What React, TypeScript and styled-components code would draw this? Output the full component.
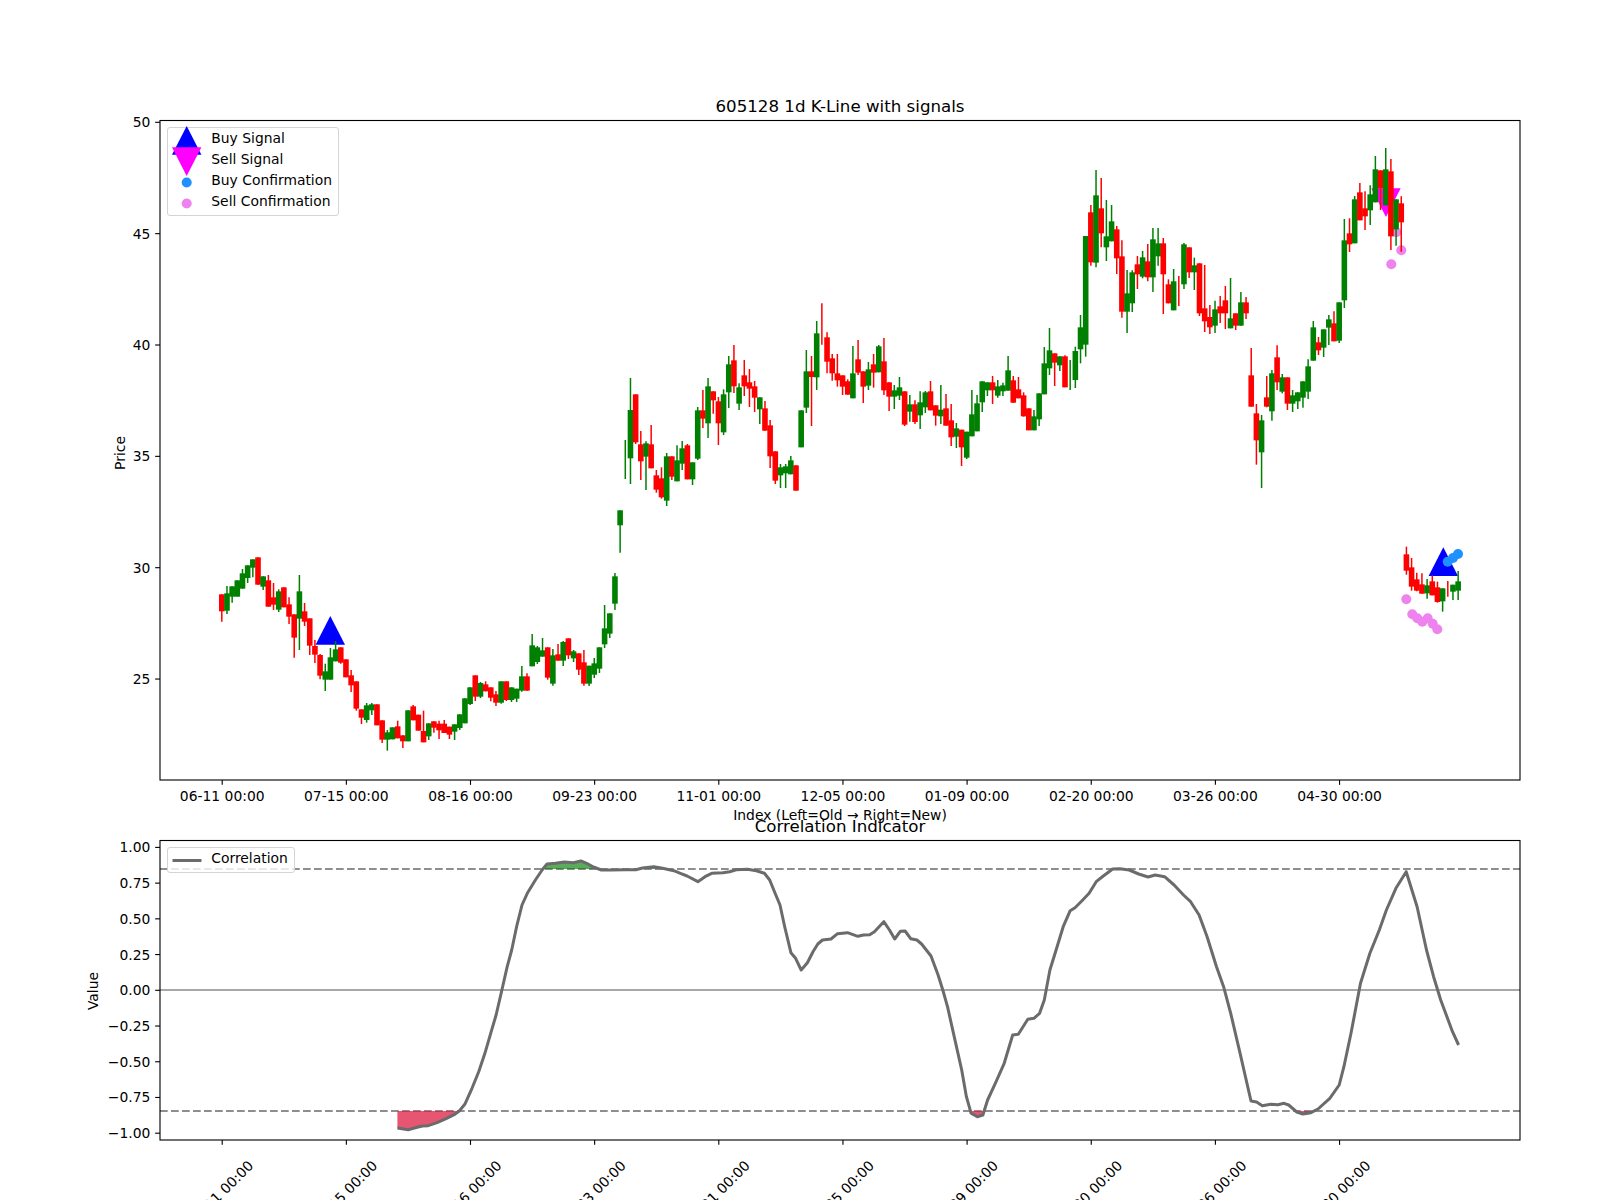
import React from "react";
import styled, { createGlobalStyle } from "styled-components";

type Bar = [string, number, number, number, number];
type Crop = { base: number; bars: Bar[] };
type Pt = [number, number];

// wick top, body top, body bottom, wick bottom, read off 3x crops (y = base + v / 3)
const crops: Crop[] = [
  {
    base: 500,
    bars: [
      ["r", 283, 283, 334, 365], ["g", 258, 280, 332, 342], ["g", 259, 259, 290, 308], ["g", 241, 241, 290, 290],
      ["g", 207, 220, 266, 266], ["g", 196, 196, 234, 249], ["g", 178, 178, 203, 232], ["r", 172, 172, 254, 254],
      ["g", 229, 229, 260, 270], ["r", 225, 241, 320, 320], ["r", 249, 292, 314, 330], ["g", 268, 274, 329, 336],
      ["r", 262, 262, 322, 322], ["r", 292, 313, 350, 372], ["r", 343, 343, 413, 473], ["g", 225, 274, 356, 450],
      ["r", 309, 334, 365, 378], ["r", 355, 355, 437, 465], ["r", 420, 438, 464, 489], ["r", 462, 465, 527, 538],
      ["g", 491, 514, 539, 573], ["g", 444, 472, 539, 539], ["g", 423, 448, 484, 484], ["r", 442, 442, 488, 491],
      ["r", 478, 478, 532, 532], ["r", 510, 526, 556, 576], ["r", 544, 544, 626, 632], ["r", 628, 628, 653, 672],
      ["g", 609, 616, 660, 668], ["g", 609, 613, 631, 645], ["r", 613, 613, 676, 676], ["r", 661, 661, 719, 729],
      ["g", 690, 697, 719, 752], ["g", 682, 682, 718, 718], ["r", 662, 679, 715, 715], ["r", 706, 706, 724, 744],
      ["g", 631, 631, 724, 724], ["r", 615, 619, 661, 661], ["r", 644, 644, 692, 692],
    ],
  },
  {
    base: 500,
    bars: [
      ["r", 632, 693, 727, 727], ["g", 670, 670, 709, 720], ["r", 664, 664, 683, 698], ["r", 662, 671, 691, 717],
      ["r", 660, 671, 699, 699], ["r", 680, 680, 704, 717], ["g", 673, 673, 695, 720], ["g", 643, 643, 684, 690],
      ["g", 595, 595, 670, 670], ["g", 562, 562, 612, 615], ["r", 526, 526, 590, 603], ["g", 546, 549, 590, 594],
      ["r", 544, 553, 574, 574], ["r", 562, 562, 593, 604], ["r", 573, 583, 608, 618], ["g", 544, 544, 608, 611],
      ["r", 544, 544, 600, 603], ["g", 562, 562, 600, 606], ["g", 566, 566, 596, 606], ["g", 498, 529, 572, 575],
      ["r", 520, 529, 572, 572], ["g", 402, 436, 499, 499], ["g", 438, 442, 486, 492], ["g", 414, 451, 470, 470],
      ["r", 442, 442, 533, 539], ["g", 447, 466, 551, 557], ["r", 432, 463, 482, 482], ["g", 423, 426, 482, 498],
      ["r", 415, 415, 466, 477], ["g", 450, 454, 475, 486], ["r", 460, 460, 509, 525], ["r", 450, 487, 551, 557],
      ["g", 497, 497, 551, 558], ["g", 474, 490, 524, 534], ["g", 442, 442, 506, 519], ["g", 315, 385, 433, 444],
      ["g", 340, 340, 401, 414], ["g", 219, 229, 311, 330], ["g", 31, 31, 76, 158],
    ],
  },
  {
    base: 340,
    bars: [
      ["g", 300, 0, 0, 417], ["g", 114, 210, 355, 432], ["r", 163, 163, 307, 312], ["r", 273, 313, 364, 420],
      ["g", 304, 310, 350, 450], ["r", 255, 313, 385, 385], ["r", 390, 406, 449, 458], ["r", 382, 415, 472, 476],
      ["g", 339, 349, 482, 498], ["r", 349, 349, 410, 420], ["g", 316, 361, 424, 424], ["g", 303, 325, 371, 390],
      ["r", 312, 316, 418, 418], ["g", 367, 367, 418, 435], ["g", 201, 211, 356, 360], ["r", 150, 211, 236, 264],
      ["g", 114, 139, 250, 294], ["r", 154, 154, 181, 221], ["r", 171, 184, 250, 315], ["g", 148, 163, 277, 285],
      ["g", 48, 73, 157, 204], ["r", 15, 61, 139, 159], ["g", 130, 142, 191, 210], ["r", 60, 106, 139, 168],
      ["r", 87, 127, 146, 201], ["r", 123, 139, 173, 216], ["g", 172, 172, 208, 252], ["r", 183, 205, 272, 272],
      ["r", 240, 256, 349, 384], ["r", 334, 334, 422, 432], ["g", 372, 382, 406, 444], ["g", 372, 379, 400, 444],
      ["g", 348, 361, 403, 403], ["r", 376, 376, 452, 452], ["g", 211, 211, 322, 322], ["g", 30, 94, 203, 219],
      ["r", 48, 94, 111, 258], ["g", -57, -20, 112, 150], ["r", -110, 0, 0, 14], ["r", -23, -8, 65, 100],
    ],
  },
  {
    base: 280,
    bars: [
      ["r", 222, 235, 280, 302], ["r", 222, 280, 301, 320], ["r", 286, 286, 320, 345], ["r", 298, 304, 344, 344],
      ["g", 198, 280, 355, 355], ["r", 180, 238, 278, 285], ["r", 274, 274, 320, 369], ["g", 246, 268, 317, 330],
      ["r", 222, 253, 278, 323], ["g", 195, 199, 277, 277], ["r", 174, 244, 331, 345], ["r", 307, 307, 350, 393],
      ["g", 315, 331, 350, 387], ["g", 291, 322, 347, 360], ["r", 334, 334, 434, 438], ["g", 345, 373, 395, 425],
      ["r", 361, 373, 426, 432], ["g", 334, 367, 406, 447], ["g", 333, 337, 382, 399], ["r", 303, 334, 391, 391],
      ["r", 376, 376, 407, 437], ["g", 315, 389, 409, 432], ["r", 342, 385, 437, 437], ["r", 372, 421, 472, 498],
      ["g", 429, 445, 470, 504], ["r", 449, 449, 502, 558], ["g", 455, 455, 533, 537], ["g", 330, 403, 469, 469],
      ["g", 345, 370, 454, 454], ["g", 304, 304, 367, 396], ["g", 307, 307, 331, 348], ["r", 288, 307, 331, 372],
      ["g", 300, 319, 347, 353], ["g", 308, 316, 334, 348], ["g", 228, 271, 332, 332], ["r", 288, 301, 368, 369],
      ["r", 291, 328, 355, 355], ["r", 337, 346, 409, 410], ["r", 385, 385, 451, 451], ["g", 390, 409, 451, 451],
      ["g", 340, 340, 418, 438], ["g", 201, 250, 343, 343], ["g", 144, 211, 265, 285], ["r", 220, 220, 248, 318],
      ["g", 229, 229, 256, 273], ["r", 226, 229, 322, 322],
    ],
  },
  {
    base: 150,
    bars: [
      ["g", 630, 0, 0, 720], ["g", 590, 603, 690, 714], ["g", 495, 532, 598, 640], ["g", 258, 258, 584, 620],
      ["r", 165, 187, 337, 347], ["g", 60, 136, 338, 352], ["r", 84, 175, 250, 292], ["g", 150, 259, 292, 333],
      ["g", 165, 214, 274, 274], ["r", 228, 238, 325, 372], ["r", 271, 319, 485, 503], ["g", 360, 430, 485, 549],
      ["g", 361, 367, 460, 486], ["r", 318, 343, 373, 417], ["g", 303, 322, 380, 385], ["r", 282, 334, 382, 394],
      ["g", 234, 268, 382, 426], ["g", 234, 280, 319, 347], ["r", 264, 280, 373, 492], ["r", 388, 403, 460, 460],
      ["g", 357, 394, 481, 481], ["r", 378, 0, 0, 468], ["g", 279, 283, 403, 417], ["r", 292, 292, 367, 384],
      ["g", 323, 346, 367, 420], ["r", 340, 340, 490, 498], ["r", 345, 475, 514, 546], ["r", 465, 501, 532, 552],
      ["g", 452, 478, 527, 549], ["r", 438, 469, 490, 519], ["r", 408, 451, 490, 537], ["g", 384, 505, 535, 535],
      ["r", 490, 490, 527, 540], ["g", 426, 457, 527, 527], ["r", 441, 457, 490, 507],
    ],
  },
  {
    base: 150,
    bars: [
      ["r", 594, 676, 770, 770], ["r", 762, 790, 871, 944], ["g", 795, 811, 907, 1014], ["r", 678, 742, 770, 772],
      ["g", 660, 670, 784, 812], ["r", 586, 622, 697, 720], ["g", 672, 682, 725, 730], ["r", 682, 682, 761, 780],
      ["g", 720, 736, 761, 786], ["g", 727, 727, 754, 777], ["g", 694, 694, 743, 773], ["g", 628, 649, 725, 747],
      ["g", 513, 532, 632, 632], ["r", 561, 577, 601, 615], ["g", 538, 538, 593, 621], ["g", 495, 508, 533, 585],
      ["r", 484, 520, 574, 574], ["g", 457, 457, 572, 579], ["g", 207, 271, 451, 474], ["r", 205, 250, 283, 306],
      ["g", 138, 148, 280, 280], ["r", 99, 127, 211, 211], ["r", 124, 175, 199, 240], ["g", 106, 133, 181, 225],
      ["g", 18, 58, 157, 157], ["r", 61, 61, 115, 180], ["g", -6, 58, 166, 166], ["r", 27, 64, 259, 300],
      ["g", 148, 148, 238, 287], ["r", 139, 160, 217, 305],
    ],
  },
  {
    base: 530,
    bars: [
      ["r", 50, 73, 122, 134], ["r", 84, 112, 170, 182], ["r", 128, 148, 182, 184], ["r", 130, 163, 191, 191],
      ["g", 147, 166, 190, 206], ["r", 136, 154, 196, 196], ["r", 155, 172, 216, 218], ["g", 175, 175, 214, 245],
      ["r", 153, 0, 0, 200], ["g", 164, 164, 185, 210], ["g", 123, 154, 182, 210],
    ],
  },
];

const candles = crops.flatMap(({ base, bars }) =>
  bars.map(([c, wt, bt, bb, wb]) => ({
    color: c === "r" ? "#ff0000" : "#008000",
    wickTop: base + wt / 3,
    bodyTop: base + bt / 3,
    bodyBottom: base + bb / 3,
    wickBottom: base + wb / 3,
  })),
);

const barX = (i: number) => 221.8 + 5.173 * i;

const dates = ["06-11", "07-15", "08-16", "09-23", "11-01", "12-05", "01-09", "02-20", "03-26", "04-30"];
const dateTicks = dates.map((d, k) => ({ label: `${d} 00:00`, x: 222.2 + 124.15 * k }));

const priceTicks = [25, 30, 35, 40, 45, 50].map((p) => ({
  label: String(p),
  y: 122.3 + (50 - p) * 22.27,
}));

const corrTicks = [1, 0.75, 0.5, 0.25, 0, -0.25, -0.5, -0.75, -1].map((v) => ({
  label: v.toFixed(2).replace("-", "\u2212"),
  y: 990.3 - v * 142.9,
}));

const buySignals: Pt[] = [[330.3, 644.7], [1443.3, 576]];
const sellSignals: Pt[] = [[1386, 188.3]];
const buyDots: Pt[] = [[1447.7, 561.7], [1453, 558], [1458, 554]];
const sellDots: Pt[] = [
  [1396.3, 232.3], [1401.3, 250.3], [1391.3, 264.3], [1406.3, 599.3], [1412.3, 614.3],
  [1417.3, 618.3], [1422.3, 621.7], [1427.7, 618.3], [1432.7, 623.7], [1437.3, 629.3],
];

// correlation line, read off the two wide crops
const corrLeft: Pt[] = [
  [711, 1074], [735, 1079], [755, 1072], [767, 1068], [780, 1067], [800, 1058], [820, 1046], [838, 1034],
  [850, 1022], [862, 1003], [878, 955], [893, 905], [907, 850], [920, 790], [932, 735], [945, 660],
  [957, 590], [967, 540], [978, 470], [990, 405], [1002, 370], [1020, 330], [1035, 300], [1046, 282],
  [1065, 280], [1085, 276], [1105, 278], [1122, 273], [1135, 280], [1150, 291], [1168, 300], [1190, 300],
  [1220, 299], [1245, 299], [1260, 294], [1285, 290], [1305, 295], [1330, 302], [1345, 310], [1360, 318],
  [1384, 335], [1400, 320], [1415, 310], [1440, 308], [1455, 305], [1470, 299], [1495, 298], [1515, 302],
  [1533, 310], [1545, 330], [1557, 370],
];
const corrRight: Pt[] = [
  [0, 405], [10, 470], [23, 548], [33, 565], [45, 600], [58, 578], [70, 545], [80, 522], [90, 510],
  [108, 507], [122, 491], [143, 488], [165, 499], [177, 495], [190, 494], [200, 485], [220, 455],
  [232, 480], [243, 507], [255, 484], [265, 483], [277, 506], [290, 510], [300, 522], [320, 558],
  [335, 615], [345, 660], [355, 710], [370, 805], [385, 900], [395, 980], [405, 1030], [418, 1040],
  [430, 1035], [440, 990], [458, 935], [475, 880], [493, 795], [505, 793], [525, 748], [538, 745],
  [550, 730], [560, 690], [572, 600], [585, 540], [600, 470], [615, 422], [625, 413], [640, 392],
  [655, 370], [670, 335], [685, 318], [705, 297], [720, 296], [740, 300], [760, 312], [780, 321],
  [795, 315], [815, 320], [835, 345], [855, 375], [870, 395], [888, 435], [905, 500], [925, 590],
  [940, 650], [955, 730], [975, 850], [998, 993], [1010, 996], [1022, 1007], [1040, 1003], [1055, 1004],
  [1068, 1000], [1078, 1005], [1095, 1026], [1108, 1032], [1125, 1028], [1140, 1017], [1165, 985],
  [1185, 945], [1195, 890], [1210, 790], [1230, 640], [1250, 550], [1270, 480], [1285, 420], [1305, 355],
  [1327, 305], [1350, 410], [1370, 540], [1385, 620], [1400, 690], [1425, 785], [1438, 825],
];
const corrLine: Pt[] = [
  ...corrLeft.map(([x, y]): Pt => [80 + x / 2.24, 770 + y / 3]),
  ...corrRight.map(([x, y]): Pt => [780 + x / 2.119, 770 + y / 3]),
];

const UPPER_Y = 869;
const LOWER_Y = 1111;

// parts of the line beyond a threshold, closed along the threshold
const beyondRegions = (pts: Pt[], level: number, above: boolean) => {
  const past = (y: number) => (above ? y < level : y > level);
  const out: Pt[][] = [];
  let cur: Pt[] = [];
  pts.forEach(([x, y], i) => {
    const prev = pts[i - 1];
    const cross = (): Pt => {
      const t = (level - prev[1]) / (y - prev[1]);
      return [prev[0] + (x - prev[0]) * t, level];
    };
    if (past(y)) {
      if (!cur.length) cur.push(prev ? cross() : [x, level]);
      cur.push([x, y]);
    } else if (cur.length) {
      cur.push(cross());
      out.push(cur);
      cur = [];
    }
  });
  return out;
};

const toPoints = (pts: Pt[]) => pts.map(([x, y]) => `${x.toFixed(1)},${y.toFixed(1)}`).join(" ");
const upTriangle = (x: number, y: number) => `${x - 14.7},${y} ${x + 14.7},${y} ${x},${y - 28.7}`;
const downTriangle = (x: number, y: number) => `${x - 14.7},${y} ${x + 14.7},${y} ${x},${y + 28.7}`;

const GlobalStyle = createGlobalStyle`
  html, body {
    margin: 0;
    padding: 0;
    background: #ffffff;
  }
`;

const Figure = styled.div`
  width: 1600px;
  height: 1200px;
  overflow: hidden;
  display: flex;
  flex-direction: column;
  background: #ffffff;
  color: #000000;
  font-family: "DejaVu Sans", sans-serif;
`;

const Panel = styled.section<{ $height: number }>`
  position: relative;
  flex: none;
  height: ${({ $height }) => $height}px;
`;

const Canvas = styled.svg`
  display: block;
  overflow: visible;
`;

const Frame = styled.rect`
  fill: none;
  stroke: #000000;
  stroke-width: 1.11;
`;

const TickMark = styled.line`
  stroke: #000000;
  stroke-width: 1.11;
`;

const TickLabel = styled.text`
  font-size: 13.89px;
  fill: #000000;
`;

const PlotTitle = styled.text`
  font-size: 16.67px;
  fill: #000000;
  text-anchor: middle;
`;

const Wick = styled.line`
  stroke-width: 1.5;
`;

const DashedLevel = styled.line`
  stroke: #8e8e8e;
  stroke-width: 2.2;
  stroke-dasharray: 7.7 3.3;
`;

const ZeroLine = styled.line`
  stroke: #a8a8a8;
  stroke-width: 2.2;
`;

const CorrPath = styled.polyline`
  fill: none;
  stroke: #6b6b6b;
  stroke-width: 3;
  stroke-linejoin: round;
`;

const Legend = styled.div<{ $top: number; $width: number }>`
  position: absolute;
  left: 167.3px;
  top: ${({ $top }) => $top}px;
  width: ${({ $width }) => $width}px;
  box-sizing: border-box;
  padding: 2px 0 0.4px 4px;
  border: 1.1px solid #d4d4d4;
  border-radius: 3px;
  background: rgba(255, 255, 255, 0.8);
`;

const LegendRow = styled.div`
  display: grid;
  grid-template-columns: 29.4px 1fr;
  column-gap: 9.6px;
  align-items: center;
  height: 21px;
`;

const LegendKey = styled.svg`
  display: block;
  width: 29.4px;
  height: 21px;
  overflow: visible;
`;

const LegendLabel = styled.span`
  font-size: 13.89px;
  line-height: 21px;
  white-space: nowrap;
  position: relative;
  top: -2px;
`;

const legendItems = [
  { label: "Buy Signal", key: <polygon points="0,24.7 29.4,24.7 14.7,-4" fill="#0000ff" /> },
  { label: "Sell Signal", key: <polygon points="0,-3.7 29.4,-3.7 14.7,25" fill="#ff00ff" /> },
  { label: "Buy Confirmation", key: <circle cx="14.7" cy="10.5" r="5" fill="#1e90ff" /> },
  { label: "Sell Confirmation", key: <circle cx="14.7" cy="10.5" r="5" fill="#ee82ee" /> },
];

const XTicks = ({ axisY, rotated }: { axisY: number; rotated?: boolean }) => (
  <>
    {dateTicks.map((t) => (
      <g key={t.label}>
        <TickMark x1={t.x} x2={t.x} y1={axisY} y2={axisY + 4.86} />
        {rotated ? (
          <TickLabel textAnchor="middle" transform={`translate(${t.x - 1.5} 1193) rotate(-45)`} dy="5">
            {t.label}
          </TickLabel>
        ) : (
          <TickLabel x={t.x} y={axisY + 21} textAnchor="middle">
            {t.label}
          </TickLabel>
        )}
      </g>
    ))}
  </>
);

const YTicks = ({ ticks }: { ticks: { label: string; y: number }[] }) => (
  <>
    {ticks.map((t) => (
      <g key={t.label}>
        <TickMark x1={155.14} x2={160} y1={t.y} y2={t.y} />
        <TickLabel x={150.3} y={t.y + 5} textAnchor="end">
          {t.label}
        </TickLabel>
      </g>
    ))}
  </>
);

const PricePanel = () => (
  <Panel $height={820}>
    <Canvas width={1600} height={820} viewBox="0 0 1600 820">
      {buySignals.map(([x, y]) => (
        <polygon key={x} points={upTriangle(x, y)} fill="#0000ff" />
      ))}
      {sellSignals.map(([x, y]) => (
        <polygon key={x} points={downTriangle(x, y)} fill="#ff00ff" />
      ))}
      {buyDots.map(([x, y]) => (
        <circle key={x} cx={x} cy={y} r={5} fill="#1e90ff" />
      ))}
      {sellDots.map(([x, y]) => (
        <circle key={x} cx={x} cy={y} r={5} fill="#ee82ee" />
      ))}
      {candles.map((c, i) => (
        <g key={i}>
          <Wick x1={barX(i)} x2={barX(i)} y1={c.wickTop} y2={c.wickBottom} stroke={c.color} />
          {c.bodyBottom > c.bodyTop && (
            <rect
              x={barX(i) - 2.8}
              y={c.bodyTop}
              width={5.6}
              height={c.bodyBottom - c.bodyTop}
              fill={c.color}
            />
          )}
        </g>
      ))}
      <Frame x={160} y={120.5} width={1360} height={659.5} />
      <YTicks ticks={priceTicks} />
      <XTicks axisY={780} />
      <PlotTitle x={840} y={111.7}>605128 1d K-Line with signals</PlotTitle>
      <TickLabel transform="translate(125 453) rotate(-90)" textAnchor="middle">Price</TickLabel>
      <TickLabel x={840} y={820} textAnchor="middle">Index (Left=Old → Right=New)</TickLabel>
    </Canvas>
    <Legend $top={127.3} $width={171.4}>
      {legendItems.map((item) => (
        <LegendRow key={item.label}>
          <LegendKey viewBox="0 0 29.4 21">{item.key}</LegendKey>
          <LegendLabel>{item.label}</LegendLabel>
        </LegendRow>
      ))}
    </Legend>
  </Panel>
);

const CorrelationPanel = () => (
  <Panel $height={380}>
    <Canvas width={1600} height={380} viewBox="0 820 1600 380">
      <DashedLevel x1={160} x2={1520} y1={UPPER_Y} y2={UPPER_Y} />
      <DashedLevel x1={160} x2={1520} y1={LOWER_Y} y2={LOWER_Y} />
      <ZeroLine x1={160} x2={1520} y1={990} y2={990} />
      {beyondRegions(corrLine, UPPER_Y, true).map((r, i) => (
        <polygon key={i} points={toPoints(r)} fill="#008000" fillOpacity={0.65} />
      ))}
      {beyondRegions(corrLine, LOWER_Y, false).map((r, i) => (
        <polygon key={i} points={toPoints(r)} fill="#dc143c" fillOpacity={0.72} />
      ))}
      <CorrPath points={toPoints(corrLine)} />
      <Frame x={160} y={840.5} width={1360} height={299.5} />
      <YTicks ticks={corrTicks} />
      <XTicks axisY={1140} rotated />
      <PlotTitle x={840} y={831.7}>Correlation Indicator</PlotTitle>
      <TickLabel transform="translate(98 991) rotate(-90)" textAnchor="middle">Value</TickLabel>
    </Canvas>
    <Legend $top={27.3} $width={127.5}>
      <LegendRow>
        <LegendKey viewBox="0 0 29.4 21">
          <line x1="0.5" x2="29.5" y1="10.5" y2="10.5" stroke="#6b6b6b" strokeWidth="3" />
        </LegendKey>
        <LegendLabel>Correlation</LegendLabel>
      </LegendRow>
    </Legend>
  </Panel>
);

export default function App() {
  return (
    <>
      <GlobalStyle />
      <Figure>
        <PricePanel />
        <CorrelationPanel />
      </Figure>
    </>
  );
}
